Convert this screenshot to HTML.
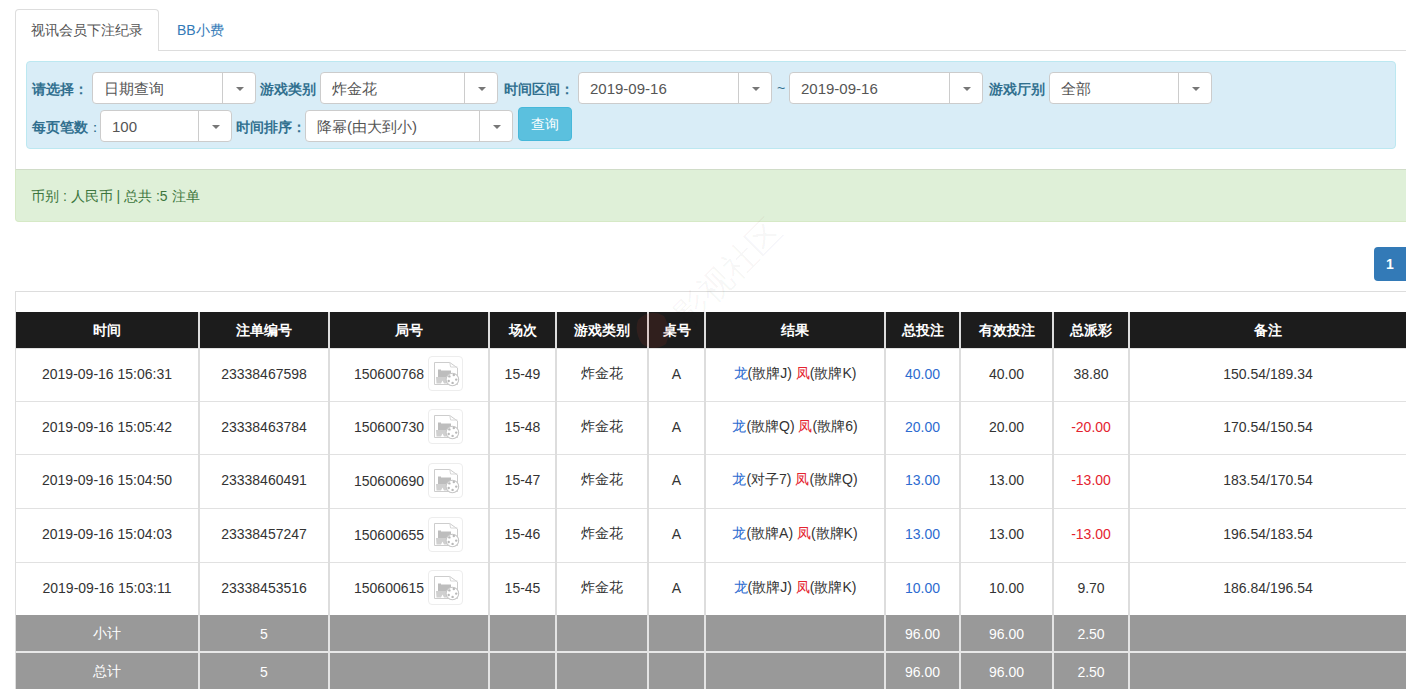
<!DOCTYPE html>
<html><head><meta charset="utf-8">
<style>
*{box-sizing:border-box;margin:0;padding:0}
html,body{width:1406px;height:689px;overflow:hidden;background:#fff;font-family:"Liberation Sans",sans-serif;color:#333}
.abs{position:absolute}
.tab{left:15px;top:9px;width:144px;height:42px;border:1px solid #ddd;border-bottom:0;border-radius:4px 4px 0 0;background:#fff;z-index:2}
.tabt{font-size:14px;color:#555;white-space:nowrap}
.navline{left:158px;top:50px;width:1260px;height:1px;background:#ddd}
.pl{left:15px;top:50px;width:1px;height:120px;background:#ddd}
.well{left:26px;top:61px;width:1370px;height:88px;background:#d9edf7;border:1px solid #bce8f1;border-radius:4px}
.lbl{font-size:14px;font-weight:bold;color:#31708f;white-space:nowrap;line-height:16px}
.sel{height:32px;background:#fff;border:1px solid #ccc;border-radius:4px;font-size:15px;color:#555;line-height:31px;padding-left:11px;white-space:nowrap}
.sel .dv{position:absolute;top:0;right:0;width:33px;height:30px;border-left:1px solid #ccc}
.sel .dv:after{content:"";position:absolute;left:13px;top:14px;border-left:4px solid transparent;border-right:4px solid transparent;border-top:4px solid #777}
.btn{left:518px;top:107px;width:54px;height:34px;background:#5bc0de;border:1px solid #46b8da;border-radius:4px;color:#fff;font-size:14px;line-height:32px;text-align:center}
.alert{left:15px;top:169px;width:1420px;height:53px;background:#dff0d8;border:1px solid #d6e9c6;border-top-color:#d0dcc8;border-radius:0 4px 4px 4px;color:#3c763d;font-size:14px}
.page{left:1374px;top:247px;width:40px;height:34px;background:#337ab7;border-radius:4px;color:#fff;font-size:14px;font-weight:bold;line-height:34px;padding-left:12px}
.ptop{left:15px;top:291px;width:1400px;height:1px;background:#ddd}
.pleft{left:15px;top:291px;width:1px;height:400px;background:#ddd}
table{position:absolute;left:16px;top:312px;width:1391px;border-collapse:collapse;table-layout:fixed;font-size:14px}
th{background:#1c1c1c;color:#fff;font-weight:bold;height:36px;font-size:14px;padding-top:2px;border-left:2px solid #ddd;border-right:2px solid #ddd}
td{text-align:center;color:#333;padding-bottom:2px;border-left:2px solid #ddd;border-right:2px solid #ddd;border-top:1px solid #e1e1e1;height:53px;white-space:nowrap}
th:first-child,td:first-child{border-left:0}
tr.g td{background:#999;color:#fff;height:37px;padding-bottom:0;padding-top:1px;border-top:1px solid #999;border-left-color:#e4e4e4;border-right-color:#e4e4e4}
tr.t td{border-top:2px solid #e8e8e8}
td.jh{text-align:left;padding-left:24px}
.b{color:#2d6bd0}.r{color:#e4232f}
.ic{display:inline-block;vertical-align:-12.5px;width:35px;height:35px;border:1px solid #ededed;border-radius:4px;margin-left:4px;position:relative;background:#fff}
</style></head><body>
<div class="abs tab"></div>
<div class="abs tabt" style="left:31px;top:22px;z-index:3">视讯会员下注纪录</div>
<div class="abs navline"></div>
<div class="abs tabt" style="left:177px;top:22px;color:#337ab7">BB小费</div>
<div class="abs pl"></div>
<div class="abs well"></div>

<div class="abs lbl" style="left:32px;top:81px">请选择：</div>
<div class="abs sel" style="left:92px;top:72px;width:164px">日期查询<div class="dv"></div></div>
<div class="abs lbl" style="left:260px;top:81px">游戏类别</div>
<div class="abs sel" style="left:320px;top:72px;width:178px">炸金花<div class="dv"></div></div>
<div class="abs lbl" style="left:504px;top:81px">时间区间：</div>
<div class="abs sel" style="left:578px;top:72px;width:194px">2019-09-16<div class="dv"></div></div>
<div class="abs lbl" style="left:777px;top:80px;color:#31708f;font-weight:normal">~</div>
<div class="abs sel" style="left:789px;top:72px;width:194px">2019-09-16<div class="dv"></div></div>
<div class="abs lbl" style="left:989px;top:81px">游戏厅别</div>
<div class="abs sel" style="left:1049px;top:72px;width:163px">全部<div class="dv"></div></div>

<div class="abs lbl" style="left:32px;top:119px">每页笔数<span style="font-weight:normal">：</span></div>
<div class="abs sel" style="left:100px;top:110px;width:132px">100<div class="dv"></div></div>
<div class="abs lbl" style="left:236px;top:119px">时间排序：</div>
<div class="abs sel" style="left:305px;top:110px;width:208px">降幂(由大到小)<div class="dv"></div></div>
<div class="abs btn">查询</div>

<div class="abs alert"><div class="abs" style="left:15px;top:18px;white-space:nowrap">币别 : 人民币 | 总共 :5 注单</div></div>
<div class="abs page">1</div>
<div class="abs ptop"></div>
<div class="abs pleft"></div>

<table>
<colgroup><col style="width:183px"><col style="width:130px"><col style="width:160px"><col style="width:67px"><col style="width:92px"><col style="width:57px"><col style="width:180px"><col style="width:75px"><col style="width:93px"><col style="width:76px"><col style="width:278px"></colgroup>
<tr><th>时间</th><th>注单编号</th><th>局号</th><th>场次</th><th>游戏类别</th><th>桌号</th><th>结果</th><th>总投注</th><th>有效投注</th><th>总派彩</th><th>备注</th></tr>
<tr><td>2019-09-16 15:06:31</td><td>23338467598</td><td class="jh">150600768<span class="ic"><svg width="35" height="35" viewBox="0 0 35 35" style="position:absolute;left:-1px;top:-1px"><path d="M6.5 6.5H21.8L29.5 12V28.5H6.5Z" fill="#fff" stroke="#cdcdcd" stroke-width="1"/><path d="M21.8 6.8L22.6 11H29.4" fill="none" stroke="#d8d8d8" stroke-width="1"/><path d="M10 13.5H13V14.5H23V21H10Z" fill="#bdbdbd"/><path d="M8 21H20.5L19.5 27.5H16L14.5 24.5L13 27.5H8.5Z" fill="#d0d0d0"/><circle cx="24.4" cy="23.5" r="6.3" fill="#fff" stroke="#c6c6c6" stroke-width="1.1"/><g fill="#b9b9b9"><circle cx="21.4" cy="20.4" r="1.2"/><circle cx="25.8" cy="19" r="1.2"/><circle cx="28.2" cy="23.6" r="1.2"/><circle cx="24.6" cy="26.9" r="1.2"/><circle cx="20.7" cy="25" r="1.2"/></g></svg></span></td><td>15-49</td><td>炸金花</td><td>A</td><td><span class="b">龙</span>(散牌J) <span class="r">凤</span>(散牌K)</td><td class="b">40.00</td><td>40.00</td><td>38.80</td><td>150.54/189.34</td></tr>
<tr><td>2019-09-16 15:05:42</td><td>23338463784</td><td class="jh">150600730<span class="ic"><svg width="35" height="35" viewBox="0 0 35 35" style="position:absolute;left:-1px;top:-1px"><path d="M6.5 6.5H21.8L29.5 12V28.5H6.5Z" fill="#fff" stroke="#cdcdcd" stroke-width="1"/><path d="M21.8 6.8L22.6 11H29.4" fill="none" stroke="#d8d8d8" stroke-width="1"/><path d="M10 13.5H13V14.5H23V21H10Z" fill="#bdbdbd"/><path d="M8 21H20.5L19.5 27.5H16L14.5 24.5L13 27.5H8.5Z" fill="#d0d0d0"/><circle cx="24.4" cy="23.5" r="6.3" fill="#fff" stroke="#c6c6c6" stroke-width="1.1"/><g fill="#b9b9b9"><circle cx="21.4" cy="20.4" r="1.2"/><circle cx="25.8" cy="19" r="1.2"/><circle cx="28.2" cy="23.6" r="1.2"/><circle cx="24.6" cy="26.9" r="1.2"/><circle cx="20.7" cy="25" r="1.2"/></g></svg></span></td><td>15-48</td><td>炸金花</td><td>A</td><td><span class="b">龙</span>(散牌Q) <span class="r">凤</span>(散牌6)</td><td class="b">20.00</td><td>20.00</td><td class="r">-20.00</td><td>170.54/150.54</td></tr>
<tr style="height:54px"><td style="height:54px">2019-09-16 15:04:50</td><td>23338460491</td><td class="jh">150600690<span class="ic"><svg width="35" height="35" viewBox="0 0 35 35" style="position:absolute;left:-1px;top:-1px"><path d="M6.5 6.5H21.8L29.5 12V28.5H6.5Z" fill="#fff" stroke="#cdcdcd" stroke-width="1"/><path d="M21.8 6.8L22.6 11H29.4" fill="none" stroke="#d8d8d8" stroke-width="1"/><path d="M10 13.5H13V14.5H23V21H10Z" fill="#bdbdbd"/><path d="M8 21H20.5L19.5 27.5H16L14.5 24.5L13 27.5H8.5Z" fill="#d0d0d0"/><circle cx="24.4" cy="23.5" r="6.3" fill="#fff" stroke="#c6c6c6" stroke-width="1.1"/><g fill="#b9b9b9"><circle cx="21.4" cy="20.4" r="1.2"/><circle cx="25.8" cy="19" r="1.2"/><circle cx="28.2" cy="23.6" r="1.2"/><circle cx="24.6" cy="26.9" r="1.2"/><circle cx="20.7" cy="25" r="1.2"/></g></svg></span></td><td>15-47</td><td>炸金花</td><td>A</td><td><span class="b">龙</span>(对子7) <span class="r">凤</span>(散牌Q)</td><td class="b">13.00</td><td>13.00</td><td class="r">-13.00</td><td>183.54/170.54</td></tr>
<tr style="height:54px"><td style="height:54px">2019-09-16 15:04:03</td><td>23338457247</td><td class="jh">150600655<span class="ic"><svg width="35" height="35" viewBox="0 0 35 35" style="position:absolute;left:-1px;top:-1px"><path d="M6.5 6.5H21.8L29.5 12V28.5H6.5Z" fill="#fff" stroke="#cdcdcd" stroke-width="1"/><path d="M21.8 6.8L22.6 11H29.4" fill="none" stroke="#d8d8d8" stroke-width="1"/><path d="M10 13.5H13V14.5H23V21H10Z" fill="#bdbdbd"/><path d="M8 21H20.5L19.5 27.5H16L14.5 24.5L13 27.5H8.5Z" fill="#d0d0d0"/><circle cx="24.4" cy="23.5" r="6.3" fill="#fff" stroke="#c6c6c6" stroke-width="1.1"/><g fill="#b9b9b9"><circle cx="21.4" cy="20.4" r="1.2"/><circle cx="25.8" cy="19" r="1.2"/><circle cx="28.2" cy="23.6" r="1.2"/><circle cx="24.6" cy="26.9" r="1.2"/><circle cx="20.7" cy="25" r="1.2"/></g></svg></span></td><td>15-46</td><td>炸金花</td><td>A</td><td><span class="b">龙</span>(散牌A) <span class="r">凤</span>(散牌K)</td><td class="b">13.00</td><td>13.00</td><td class="r">-13.00</td><td>196.54/183.54</td></tr>
<tr><td>2019-09-16 15:03:11</td><td>23338453516</td><td class="jh">150600615<span class="ic"><svg width="35" height="35" viewBox="0 0 35 35" style="position:absolute;left:-1px;top:-1px"><path d="M6.5 6.5H21.8L29.5 12V28.5H6.5Z" fill="#fff" stroke="#cdcdcd" stroke-width="1"/><path d="M21.8 6.8L22.6 11H29.4" fill="none" stroke="#d8d8d8" stroke-width="1"/><path d="M10 13.5H13V14.5H23V21H10Z" fill="#bdbdbd"/><path d="M8 21H20.5L19.5 27.5H16L14.5 24.5L13 27.5H8.5Z" fill="#d0d0d0"/><circle cx="24.4" cy="23.5" r="6.3" fill="#fff" stroke="#c6c6c6" stroke-width="1.1"/><g fill="#b9b9b9"><circle cx="21.4" cy="20.4" r="1.2"/><circle cx="25.8" cy="19" r="1.2"/><circle cx="28.2" cy="23.6" r="1.2"/><circle cx="24.6" cy="26.9" r="1.2"/><circle cx="20.7" cy="25" r="1.2"/></g></svg></span></td><td>15-45</td><td>炸金花</td><td>A</td><td><span class="b">龙</span>(散牌J) <span class="r">凤</span>(散牌K)</td><td class="b">10.00</td><td>10.00</td><td>9.70</td><td>186.84/196.54</td></tr>
<tr class="g"><td>小计</td><td>5</td><td></td><td></td><td></td><td></td><td></td><td>96.00</td><td>96.00</td><td>2.50</td><td></td></tr>
<tr class="g t"><td>总计</td><td>5</td><td></td><td></td><td></td><td></td><td></td><td>96.00</td><td>96.00</td><td>2.50</td><td></td></tr>
</table>
<div class="abs" style="left:630px;top:300px;width:60px;height:60px;z-index:5;pointer-events:none;opacity:.12"><svg width="60" height="60"><path d="M8 20 Q20 8 34 16 Q42 30 36 44 Q24 52 12 44 Q4 32 8 20Z" fill="#c0392b"/></svg></div>
<div class="abs" style="left:660px;top:250px;z-index:5;transform:rotate(-45deg);font-size:34px;color:rgba(0,0,0,.035);white-space:nowrap">影视社区</div>
</body></html>
